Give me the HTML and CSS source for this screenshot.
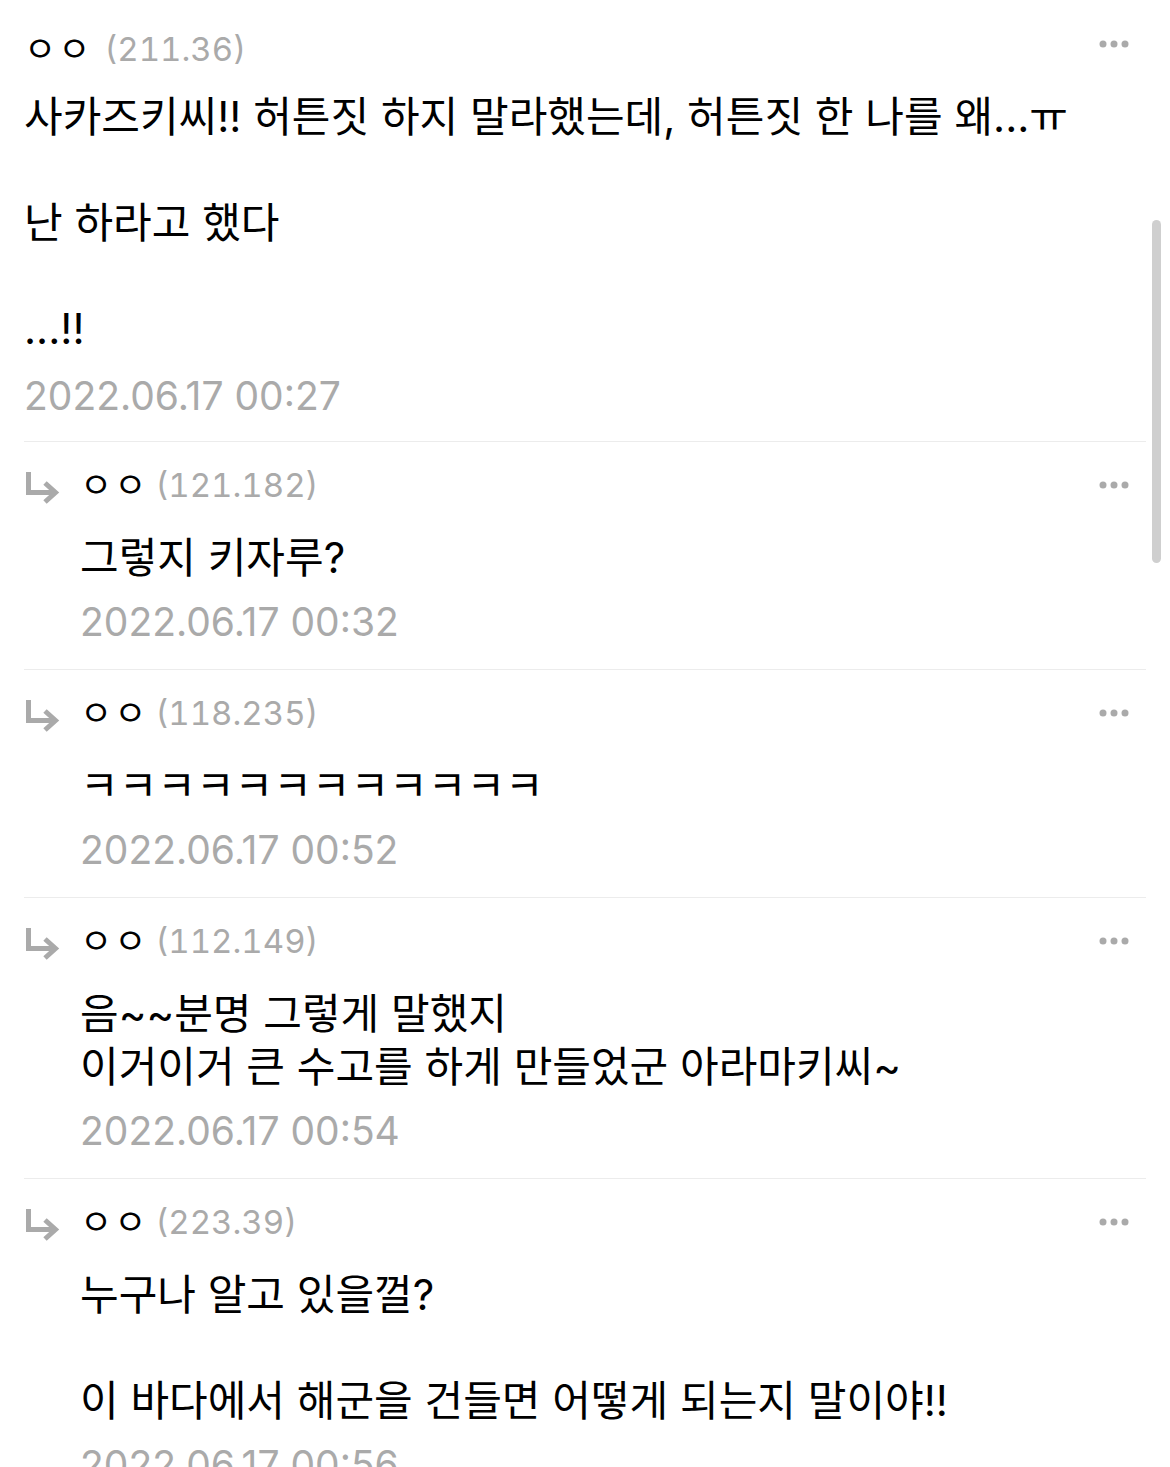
FILE: index.html
```html
<!DOCTYPE html>
<html lang="ko">
<head>
    <meta charset="UTF-8">
    <meta name="viewport" content="width=device-width, initial-scale=1.0">
    <title>댓글</title>
    <link rel="stylesheet" href="styles.css">
</head>
<body>
    <div class="comments">

        <div class="comment top">
            <div class="head">
                <span class="nick">ㅇㅇ</span>
                <span class="ip">(211.36)</span>
                <svg class="more" width="30" height="8" viewBox="0 0 30 8"><circle cx="4" cy="4" r="3.5"/><circle cx="15" cy="4" r="3.5"/><circle cx="26" cy="4" r="3.5"/></svg>
            </div>
            <p class="text">사카즈키씨!! 허튼짓 하지 말라했는데, 허튼짓 한 나를 왜...ㅠ<br><br>난 하라고 했다<br><br>...!!</p>
            <div class="date">2022.06.17 00:27</div>
        </div>

        <div class="comment reply">
            <svg class="arrow" width="36" height="40" viewBox="0 0 36 40"><path d="M4.5 2 V22.5 H31 M21 13 L31.5 22.5 L21 32"/></svg>
            <div class="main">
                <div class="head">
                    <span class="nick">ㅇㅇ</span>
                    <span class="ip">(121.182)</span>
                    <svg class="more" width="30" height="8" viewBox="0 0 30 8"><circle cx="4" cy="4" r="3.5"/><circle cx="15" cy="4" r="3.5"/><circle cx="26" cy="4" r="3.5"/></svg>
                </div>
                <p class="text">그렇지 키자루?</p>
                <div class="date">2022.06.17 00:32</div>
            </div>
        </div>

        <div class="comment reply">
            <svg class="arrow" width="36" height="40" viewBox="0 0 36 40"><path d="M4.5 2 V22.5 H31 M21 13 L31.5 22.5 L21 32"/></svg>
            <div class="main">
                <div class="head">
                    <span class="nick">ㅇㅇ</span>
                    <span class="ip">(118.235)</span>
                    <svg class="more" width="30" height="8" viewBox="0 0 30 8"><circle cx="4" cy="4" r="3.5"/><circle cx="15" cy="4" r="3.5"/><circle cx="26" cy="4" r="3.5"/></svg>
                </div>
                <p class="text">ㅋㅋㅋㅋㅋㅋㅋㅋㅋㅋㅋㅋ</p>
                <div class="date">2022.06.17 00:52</div>
            </div>
        </div>

        <div class="comment reply">
            <svg class="arrow" width="36" height="40" viewBox="0 0 36 40"><path d="M4.5 2 V22.5 H31 M21 13 L31.5 22.5 L21 32"/></svg>
            <div class="main">
                <div class="head">
                    <span class="nick">ㅇㅇ</span>
                    <span class="ip">(112.149)</span>
                    <svg class="more" width="30" height="8" viewBox="0 0 30 8"><circle cx="4" cy="4" r="3.5"/><circle cx="15" cy="4" r="3.5"/><circle cx="26" cy="4" r="3.5"/></svg>
                </div>
                <p class="text">음~~분명 그렇게 말했지<br>이거이거 큰 수고를 하게 만들었군 아라마키씨~</p>
                <div class="date">2022.06.17 00:54</div>
            </div>
        </div>

        <div class="comment reply">
            <svg class="arrow" width="36" height="40" viewBox="0 0 36 40"><path d="M4.5 2 V22.5 H31 M21 13 L31.5 22.5 L21 32"/></svg>
            <div class="main">
                <div class="head">
                    <span class="nick">ㅇㅇ</span>
                    <span class="ip">(223.39)</span>
                    <svg class="more" width="30" height="8" viewBox="0 0 30 8"><circle cx="4" cy="4" r="3.5"/><circle cx="15" cy="4" r="3.5"/><circle cx="26" cy="4" r="3.5"/></svg>
                </div>
                <p class="text">누구나 알고 있을껄?<br><br>이 바다에서 해군을 건들면 어떻게 되는지 말이야!!</p>
                <div class="date">2022.06.17 00:56</div>
            </div>
        </div>

    </div>

    <div class="scrollbar"></div>
</body>
</html>
```

FILE: styles.css
```css
html {
    overflow: hidden;
}

body {
    margin: 0;
    background: #fff;
    color: #000;
    font-family: Inter, "Noto Sans CJK KR", sans-serif;
}

.comments {
    padding: 0 24px;
}

.comment {
    border-top: 1px solid #ececec;
}

.comment.top {
    border-top: none;
    padding: 27px 0 23px;
}

.reply {
    display: flex;
    padding: 21px 0 25px;
}

.arrow {
    flex: none;
    width: 36px;
    height: 40px;
    margin: 7px 20px 0 0;
    fill: none;
    stroke: #aaaaaa;
    stroke-width: 5;
}

.main {
    flex: 1;
    min-width: 0;
}

.head {
    display: flex;
    align-items: center;
    height: 44px;
    line-height: 44px;
    font-size: 33px;
}

.nick {
    color: #000;
    font-size: 35px;
    letter-spacing: 2px;
}

.ip {
    color: #aaaaaa;
    margin-left: 7px;
    font-variant-numeric: tabular-nums;
}

.top .ip {
    margin-left: 12px;
}

.more {
    margin-left: auto;
    margin-right: 17px;
    fill: #aaaaaa;
}

.top .more {
    margin-bottom: 10px;
}

.text {
    margin: 24px 0 0;
    font-size: 42px;
    line-height: 53px;
}

.top .text {
    margin-top: 19px;
}

.date {
    margin-top: 16px;
    font-size: 39px;
    line-height: 44px;
    color: #aaaaaa;
}

.top .date {
    margin-top: 19px;
}

.scrollbar {
    position: fixed;
    left: 1152px;
    top: 220px;
    width: 9px;
    height: 343px;
    border-radius: 5px;
    background: #cfcfcf;
}
```
